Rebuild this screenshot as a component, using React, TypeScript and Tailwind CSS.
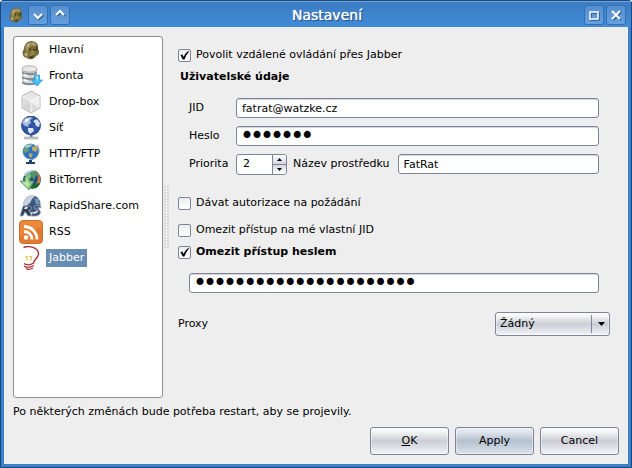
import { useState } from "react";
import type { ReactNode } from "react";

const fieldClass =
  "h-5 min-w-0 rounded-[3px] border border-[#80839a] bg-white px-[5px] text-black shadow-[inset_0_1px_0_#d4d4da] outline-none";

function RatIcon({ className }: { className: string }) {
  return (
    <svg className={className} viewBox="0 0 20 20">
      <path d="M3 17C1 14 1 11 3 9C3 5 6 1 10 1C15 1 18 4 17 9C19 12 18 15 15 16C13 20 8 20 6 18Z" fill="#776b38" />
      <path d="M4 9C5 4 8 2 11 2C14 2 16 4 16 7C13 5 9 5 8 9L7 13Z" fill="#9a8f57" />
      <path d="M6 4L9 3L8 6L5 8ZM11 3L14 4L13 6Z" fill="#beb68a" />
      <path d="M8 9L10 8L9 11ZM12 9L15 9L13 11Z" fill="#352e12" />
      <path d="M10 11L12 10L14 14L11 17L8 15Z" fill="#8e8348" />
      <path d="M3 14L6 12L7 15L5 17Z" fill="#b5ad7b" />
      <path d="M8 17L13 15L11 19ZM15 5L17 9L15 12Z" fill="#463e1c" />
    </svg>
  );
}

function DatabaseIcon() {
  return (
    <svg className="h-6 w-6" viewBox="0 0 24 24">
      <path d="M3 5V19C3 22 18 22 18 19V5" fill="#d2d4d6" />
      <path d="M3 7V9C5 12 16 12 18 9V7C16 10 5 10 3 7ZM3 12V14C5 17 16 17 18 14V12C16 15 5 15 3 12ZM3 17V19C5 22 16 22 18 19V17C16 20 5 20 3 17Z" fill="#85898c" />
      <path d="M5 10V12L9 13V11ZM5 15V17L9 18V16Z" fill="#f8f8f8" />
      <ellipse cx="10.500" cy="5" rx="7.500" ry="3.200" fill="#e8e8e8" stroke="#999b9d" strokeWidth=".8" />
      <path d="M15.500 11H20.500V16H23.500L18 22L12.500 16H15.500Z" fill="#45bdf4" stroke="#3c97dc" strokeWidth=".8" />
      <path d="M17 12H19V17H18Z" fill="#9ae8ff" />
    </svg>
  );
}

function BoxIcon() {
  return (
    <svg className="h-6 w-6" viewBox="0 0 24 24">
      <path d="M12 1L21 6V18L12 23L3 18V6Z" fill="#e6e6e6" stroke="#a8a8a8" strokeWidth=".8" />
      <path d="M3.500 6.500L12 11V22L3.500 17.500Z" fill="#dcdcdc" />
      <path d="M12 11L20.500 6.500V17.500L12 22Z" fill="#efefef" />
      <path d="M12 12L20 18L12 22L4 18Z" fill="#cfcfcf" opacity=".6" />
      <path d="M3.500 6.500L12 11L20.500 6.500M12 11V22" fill="none" stroke="#fff" strokeWidth=".8" />
    </svg>
  );
}

function NetworkIcon() {
  return (
    <svg className="h-6 w-6" viewBox="0 0 24 24">
      <path d="M11 18H13.500V21H11Z" fill="#777d86" />
      <rect x="5" y="21" width="14" height="2" rx="1" fill="#c9cbcd" stroke="#8d9093" strokeWidth=".5" />
      <circle cx="12" cy="9.500" r="9.500" fill="#3156a5" stroke="#1c3678" strokeWidth=".8" />
      <path d="M4 5C7 0 13 1 14 2L11 4L12 7L9 9L10 11L6 10L3 7Z" fill="#a9bee2" />
      <path d="M14 5L18 3L21 7L20 11L17 10L16 7ZM9 12L14 12L15 15L11 18L9 15Z" fill="#d8e3f5" />
      <path d="M6 3L11 2L9 5L6 7Z" fill="#f3f7ff" />
    </svg>
  );
}

function GlobeIcon() {
  return (
    <svg className="h-6 w-6" viewBox="0 0 24 24">
      <path d="M18 3C22 9 19 17 11 18" fill="none" stroke="#6f8bb0" strokeWidth="1.200" />
      <circle cx="11.500" cy="9.500" r="7.500" fill="#2b74c0" stroke="#4a76a5" strokeWidth=".8" />
      <path d="M5 6L8 3L13 2.500L12 5L9 6L10 9L6 11L4.500 9Z" fill="#6d9f72" />
      <path d="M13 5L17 4L18.500 8L16 10L13 8ZM10 11L14 12L12 16L10 14Z" fill="#c3ab62" />
      <path d="M6 5C8 2.500 11 2 14 3L8 6Z" fill="#c3ebfa" opacity=".7" />
      <path d="M10 18H13V20H16V22H7V20H10Z" fill="#1c416f" />
    </svg>
  );
}

function TorrentIcon() {
  return (
    <svg className="h-6 w-6" viewBox="0 0 24 24">
      <circle cx="13" cy="11.500" r="9" fill="#1d4d7c" />
      <path d="M13 3L17 2.500L20 6L17 8L15 12L12 8Z" fill="#549068" />
      <path d="M18 4.500C23 9 23 16 17 20L16 17C20 12 19 9 18 4.500Z" fill="#c07f45" />
      <path d="M5 8C6 4 11 2 15 3L11 5L9 8Z" fill="#b1cbe2" />
      <path d="M1 13H6C5 8 8 6 12 5V10C10 10 10 12 11 13H15L10 22Z" fill="#7fc27d" stroke="#4c9c5e" strokeWidth=".8" />
      <path d="M3 14H7L8 8L9 14L11 16L9 20Z" fill="#bde3a4" />
      <path d="M11 20C16 22 20 19 21 15L15 16Z" fill="#236735" />
    </svg>
  );
}

function RapidIcon() {
  return (
    <svg className="h-6 w-6" viewBox="0 0 24 24">
      <circle cx="13" cy="10" r="8.500" fill="#3b577f" />
      <path d="M5 7C7 2 12 0 16 2L13 5L11 9L7 12L4 11Z" fill="#c7d1df" />
      <path d="M15 4L20 5L21 10L17 10Z" fill="#7893b8" />
      <path d="M4 12H10C14 13 13 16 10 16L13 22H9L6 18L4 22H1Z" fill="#33415a" stroke="#a8b4c3" strokeWidth=".8" />
      <path d="M22 12C16 9 12 14 18 16C20 18 17 20 13 19L12 22C22 24 24 17 19 15C17 14 19 13 22 14Z" fill="#48597a" stroke="#b9c4d1" strokeWidth=".7" />
      <path d="M6 13H9L8 15H5Z" fill="#dce3e9" />
    </svg>
  );
}

function RssIcon() {
  return (
    <svg className="h-6 w-6" viewBox="0 0 24 24">
      <rect x=".5" y=".5" width="23" height="23" rx="3.500" fill="#e2792f" stroke="#cc6f2c" />
      <path d="M1 5C1 2 2 1 5 1H19C23 1 23 3 23 6L1 16Z" fill="#f09042" opacity=".65" />
      <circle cx="7" cy="17.500" r="2.200" fill="#fff" />
      <path d="M5 11.500A8 8 0 0 1 13 19.500M5 6.500A13 13 0 0 1 18 19.500" fill="none" stroke="#fff" strokeWidth="2.800" />
    </svg>
  );
}

function JabberIcon() {
  return (
    <svg className="h-6 w-6" viewBox="0 0 24 24">
      <path d="M4.500 1.500C11 -1 20 2 19.500 8.500C19 12 15 13 14.500 17" fill="none" stroke="#b02e3c" strokeWidth="1.400" />
      <path d="M5 17.500C8 20 12 18.500 15 17M5 20C8 22.500 12 21 15 19.500M7 22.500C9 24 12 23 14 22" fill="none" stroke="#b02e3c" strokeWidth="1.300" />
      <path d="M6.500 11.500L8 10.500V14.500M10 10.500H12.500V12.500L11 14.500" fill="none" stroke="#e5c04a" strokeWidth="1.100" />
    </svg>
  );
}

const sections = [
  { name: "Hlavní", icon: <RatIcon className="h-5 w-5" /> },
  { name: "Fronta", icon: <DatabaseIcon /> },
  { name: "Drop-box", icon: <BoxIcon /> },
  { name: "Síť", icon: <NetworkIcon /> },
  { name: "HTTP/FTP", icon: <GlobeIcon /> },
  { name: "BitTorrent", icon: <TorrentIcon /> },
  { name: "RapidShare.com", icon: <RapidIcon /> },
  { name: "RSS", icon: <RssIcon /> },
  { name: "Jabber", icon: <JabberIcon /> },
];

function TitleButton({ label, children }: { label: string; children: ReactNode }) {
  return (
    <button
      type="button"
      aria-label={label}
      className="flex h-5 w-5 items-center justify-center rounded-[3px] border border-[#3470b4] bg-linear-to-b from-[#568fcf] to-[#659fdd]"
    >
      <svg className="h-3 w-3 drop-shadow-[1px_1px_0_#28598f]" viewBox="0 0 12 12" fill="none" stroke="#fff" strokeWidth="2">
        {children}
      </svg>
    </button>
  );
}

function CheckRow({ label, defaultChecked, bold, className }: {
  label: string;
  defaultChecked?: boolean;
  bold?: boolean;
  className?: string;
}) {
  return (
    <label className={`flex h-5 items-center gap-[5px] ${bold ? "font-bold" : ""} ${className ?? ""}`}>
      <span className="relative h-[13px] w-[13px]">
        <input
          type="checkbox"
          defaultChecked={defaultChecked}
          className="peer block h-[13px] w-[13px] appearance-none rounded-[2px] border border-[#80839a] bg-linear-to-b from-[#ececec] to-white"
        />
        <svg className="pointer-events-none absolute inset-0 hidden h-[13px] w-[13px] peer-checked:block" viewBox="0 0 13 13">
          <path d="M2.500 6L4.500 5.500L5.500 8C7 5 8.500 3 10.500 2L11 2.500C9 5 7.500 7.500 6.500 10.500H4.700Z" fill="#000" />
        </svg>
      </span>
      {label}
    </label>
  );
}

function DialogButton({ primary, children }: { primary?: boolean; children: ReactNode }) {
  return (
    <button
      type="button"
      className={`h-7 w-[79px] rounded-[3px] border border-[#80839a] bg-linear-to-b shadow-[inset_0_0_0_1px_#ffffff66] ${
        primary
          ? "from-[#e6ebf1] from-10% via-[#b4c0ce] via-50% to-[#dde5ed]"
          : "from-[#f9f9f9] from-10% via-[#cbced6] via-50% to-[#f4f4f6]"
      }`}
    >
      {children}
    </button>
  );
}

export default function App() {
  const [active, setActive] = useState("Jabber");
  const [priority, setPriority] = useState(2);

  return (
    <div className="flex min-h-screen flex-col rounded-t-[3px] border border-[#1d4775] bg-[#3a80cb] font-['DejaVu_Sans',sans-serif] text-[11px] text-black">
      {/* Title bar */}
      <header className="flex h-[26px] items-center gap-0.5 border-t border-[#6ba4df] bg-linear-to-b from-[#3c7cc2] to-[#418bd9] px-[5px]">
        <RatIcon className="mx-0.5 h-4 w-4" />
        <TitleButton label="Minimalizovat"><path d="M2 5L6 9L10 5" /></TitleButton>
        <TitleButton label="Sbalit"><path d="M2 6L6 2L10 6" /></TitleButton>
        <h1 className="flex-1 text-center text-[14px] leading-5 text-white [text-shadow:0_0_1px_#fff,1px_1px_1px_#163d68]">Nastavení</h1>
        <TitleButton label="Maximalizovat"><path d="M2 3H10V10H2Z" strokeWidth="1.500" /></TitleButton>
        <TitleButton label="Zavřít"><path d="M2 2L10 10M10 2L2 10" /></TitleButton>
      </header>

      <div className="mx-[3px] mb-[3px] flex flex-1 flex-col bg-[#eee] p-[9px]">
        <main className="flex flex-1">
          {/* Sections */}
          <nav className="w-[150px] shrink-0 rounded-[3px] border border-[#8e8e8e] bg-white">
            <ul>
              {sections.map((section) => (
                <li key={section.name}>
                  <button
                    type="button"
                    onClick={() => setActive(section.name)}
                    className="flex h-[26px] w-full items-center gap-[3px] pl-[5px] text-left"
                  >
                    <span className="flex w-6 justify-center">{section.icon}</span>
                    <span className={active === section.name ? "bg-[#678db2] px-[3px] py-px text-white" : "px-[3px]"}>
                      {section.name}
                    </span>
                  </button>
                </li>
              ))}
            </ul>
          </nav>

          <div className="flex w-[15px] items-center pl-px">
            <div className="h-[62px] w-[5px] bg-[radial-gradient(circle_at_1px_1px,#aaa_0.5px,transparent_0.8px)] bg-size-[3px_3px]" />
          </div>

          <form className="flex min-w-0 flex-1 flex-col pt-[9px] pr-[9px]" onSubmit={(e) => e.preventDefault()}>
            <CheckRow label="Povolit vzdálené ovládání přes Jabber" defaultChecked />
            <h2 className="pl-0.5 font-bold leading-6">Uživatelské údaje</h2>

            <div className="mt-[9px] flex flex-col gap-2 px-[11px]">
              <div className="flex items-center">
                <label htmlFor="jid" className="w-[47px]">JID</label>
                <input id="jid" defaultValue="fatrat@watzke.cz" className={`${fieldClass} flex-1 text-[11px]`} />
              </div>
              <div className="flex items-center">
                <label htmlFor="password" className="w-[47px]">Heslo</label>
                <input
                  id="password"
                  type="password"
                  defaultValue="tajemny"
                  className={`${fieldClass} flex-1 text-[17px] [-webkit-text-stroke:2px_#000]`}
                />
              </div>
              <div className="flex items-start">
                <label htmlFor="priority" className="w-[47px] leading-5">Priorita</label>
                <div className="flex h-[21px] w-[51px] overflow-hidden rounded-[3px] border border-[#80839a] bg-white">
                  <input
                    id="priority"
                    value={priority}
                    onChange={(e) => setPriority(Number(e.target.value) || 0)}
                    className="min-w-0 flex-1 pl-1.5 outline-none"
                  />
                  <div className="flex w-3.5 flex-col border-l border-[#80839a]">
                    <button
                      type="button"
                      aria-label="Zvýšit prioritu"
                      onClick={() => setPriority(priority + 1)}
                      className="flex flex-1 items-center justify-center border-b border-[#80839a] bg-linear-to-b from-white to-[#d5d7de]"
                    >
                      <svg className="h-[3px] w-[5px]" viewBox="0 0 5 3"><path d="M0 3L2.500 0L5 3Z" /></svg>
                    </button>
                    <button
                      type="button"
                      aria-label="Snížit prioritu"
                      onClick={() => setPriority(priority - 1)}
                      className="flex flex-1 items-center justify-center bg-linear-to-b from-[#d5d7de] to-white"
                    >
                      <svg className="h-[3px] w-[5px]" viewBox="0 0 5 3"><path d="M0 0L2.500 3L5 0Z" /></svg>
                    </button>
                  </div>
                </div>
                <label htmlFor="resource" className="mr-2 ml-1.5 whitespace-nowrap leading-5">Název prostředku</label>
                <input id="resource" defaultValue="FatRat" className={`${fieldClass} flex-1 text-[11px]`} />
              </div>
            </div>

            <CheckRow label="Dávat autorizace na požádání" className="mt-[18px]" />
            <CheckRow label="Omezit přístup na mé vlastní JID" className="mt-[7px]" />
            <CheckRow label="Omezit přístup heslem" defaultChecked bold className="mt-0.5" />
            <div className="mt-[11px] flex px-[11px]">
              <input
                type="password"
                aria-label="Heslo pro přístup"
                defaultValue="velmitajneheslokrysy12"
                className={`${fieldClass} flex-1 text-[17px] [-webkit-text-stroke:2px_#000]`}
              />
            </div>

            <div className="mt-[19px] flex items-center justify-between">
              <label htmlFor="proxy">Proxy</label>
              <div className="relative">
                <select
                  id="proxy"
                  className="block h-6 w-[115px] appearance-none rounded-[3px] border border-[#80839a] bg-linear-to-b from-[#f9f9f9] from-10% via-[#cbced6] via-50% to-[#f4f4f6] pl-1 shadow-[inset_0_0_0_1px_#ffffff66]"
                >
                  <option>Žádný</option>
                </select>
                <span className="pointer-events-none absolute inset-y-[3px] right-0 flex w-[19px] items-center justify-center border-l border-[#80839a]">
                  <svg className="h-1 w-[7px]" viewBox="0 0 7 4"><path d="M0 0H7L3.500 4Z" /></svg>
                </span>
              </div>
            </div>
          </form>
        </main>

        <p className="mt-[5px] leading-[18px]">Po některých změnách bude potřeba restart, aby se projevily.</p>
        <footer className="mt-1.5 flex justify-end gap-1.5">
          <DialogButton><span className="underline">O</span>K</DialogButton>
          <DialogButton primary>Apply</DialogButton>
          <DialogButton>Cancel</DialogButton>
        </footer>
      </div>
    </div>
  );
}
